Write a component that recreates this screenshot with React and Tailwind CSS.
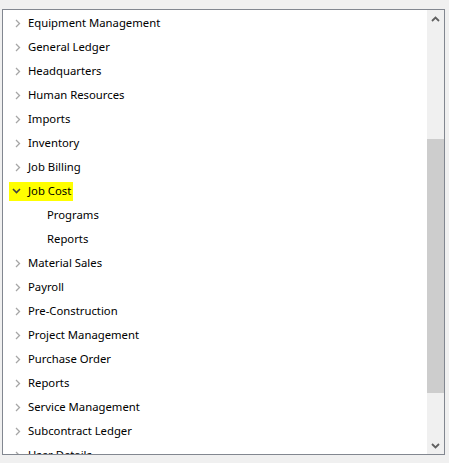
import React from 'react'

// ── Tree data ───────────────────────────────────────────────────────────────

const ITEMS = [
  { label: 'Equipment Management' },
  { label: 'General Ledger' },
  { label: 'Headquarters' },
  { label: 'Human Resources' },
  { label: 'Imports' },
  { label: 'Inventory' },
  { label: 'Job Billing' },
  { label: 'Job Cost', open: true, children: ['Programs', 'Reports'] },
  { label: 'Material Sales' },
  { label: 'Payroll' },
  { label: 'Pre-Construction' },
  { label: 'Project Management' },
  { label: 'Purchase Order' },
  { label: 'Reports' },
  { label: 'Service Management' },
  { label: 'Subcontract Ledger' },
  { label: 'User Details' },
]

// ── Glyphs ──────────────────────────────────────────────────────────────────

function ChevronRight() {
  return (
    <svg width="6" height="9" viewBox="0 0 6 9" className="shrink-0">
      <path d="M1 1 L4.5 4.5 L1 8" fill="none" stroke="#a6a6a6" strokeWidth="1.3" />
    </svg>
  )
}

function ChevronDown() {
  return (
    <svg width="9" height="6" viewBox="0 0 9 6" className="shrink-0">
      <path d="M1 1 L4.5 4.5 L8 1" fill="none" stroke="#404040" strokeWidth="1.6" />
    </svg>
  )
}

function ScrollArrow({ up }) {
  return (
    <svg width="9" height="6" viewBox="0 0 9 6">
      <path
        d={up ? 'M1 5 L4.5 1.5 L8 5' : 'M1 1 L4.5 4.5 L8 1'}
        fill="none"
        stroke="#606060"
        strokeWidth="1.8"
      />
    </svg>
  )
}

// ── App ──────────────────────────────────────────────────────────────────────

export default function App() {
  return (
    <div
      className="w-[449px] h-[463px] bg-[#f0f0f0] pt-[9px] pl-[2px] overflow-hidden"
      style={{ fontFamily: '"Noto Sans", "Open Sans", sans-serif' }}
    >
      <div className="w-[443px] h-[446px] border border-[#828790] bg-white flex overflow-hidden">
        {/* Tree */}
        <div className="flex-1 overflow-hidden pt-px">
          {ITEMS.map(item => (
            <div key={item.label}>
              <div className="h-6 flex items-center pl-[6px]">
                {item.open ? (
                  <div className="h-[19px] flex items-center bg-[#ffff00] pl-[3px] pr-[2px] gap-[7px] text-[11.3px] text-black">
                    <ChevronDown />
                    <span>{item.label}</span>
                  </div>
                ) : (
                  <div className="flex items-center pl-[6px] gap-[7px] text-[11.3px] text-black">
                    <ChevronRight />
                    <span>{item.label}</span>
                  </div>
                )}
              </div>
              {item.open &&
                item.children.map(child => (
                  <div key={child} className="h-6 flex items-center pl-[44px] text-[11.3px] text-black">
                    {child}
                  </div>
                ))}
            </div>
          ))}
        </div>

        {/* Scrollbar */}
        <div className="w-[17px] bg-[#f0f0f0] flex flex-col">
          <div className="h-[17px] flex items-center justify-center">
            <ScrollArrow up />
          </div>
          <div className="flex-1 flex flex-col">
            <div className="h-[112px]" />
            <div className="h-[254px] bg-[#cdcdcd]" />
            <div className="flex-1" />
          </div>
          <div className="h-[17px] flex items-center justify-center">
            <ScrollArrow />
          </div>
        </div>
      </div>
    </div>
  )
}
